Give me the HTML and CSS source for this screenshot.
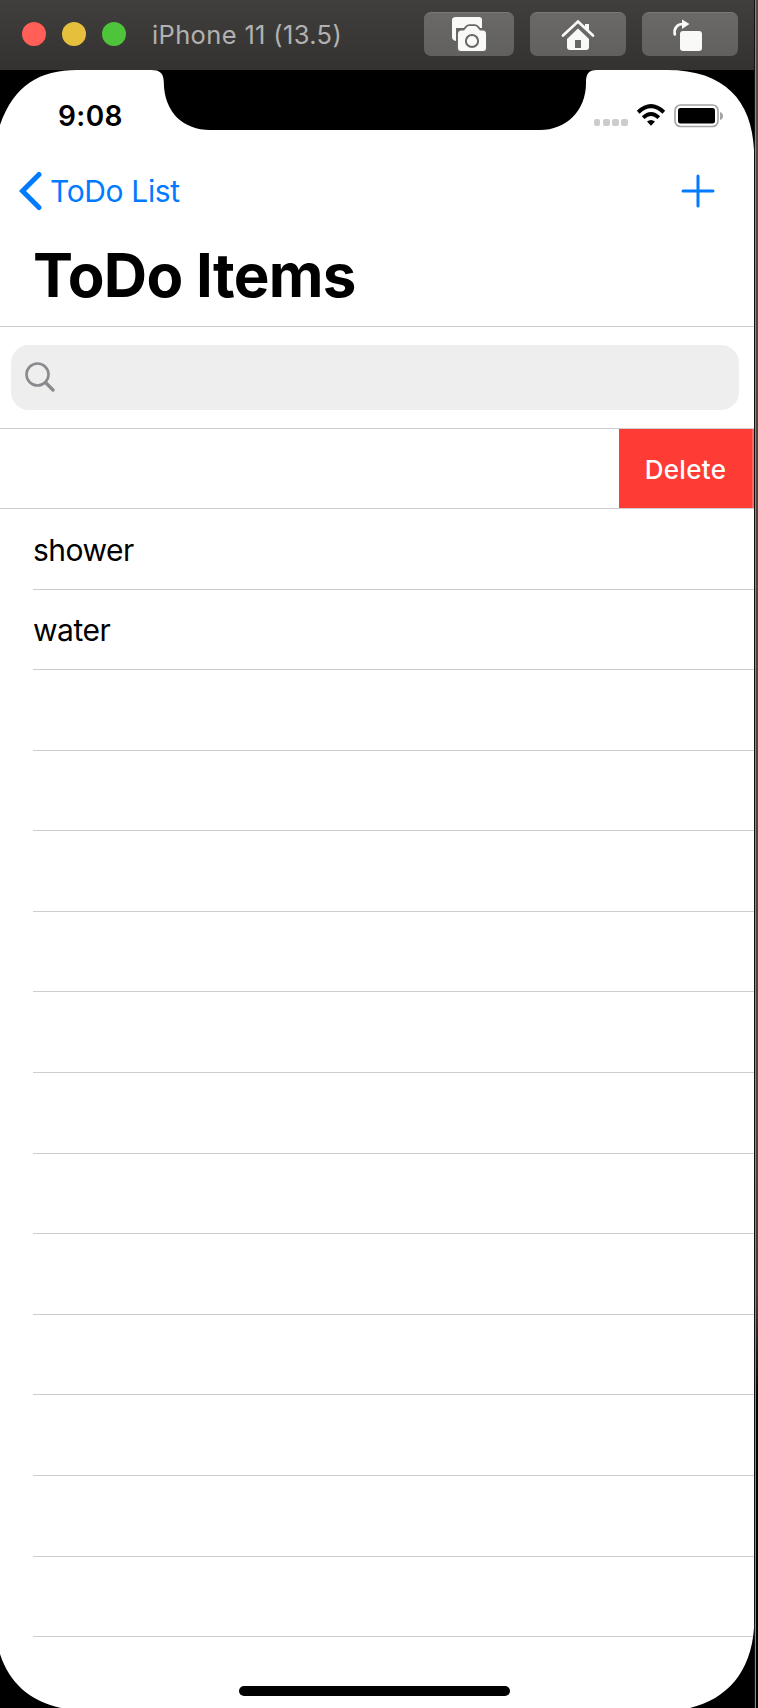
FILE: index.html
```html
<!DOCTYPE html>
<html lang="en">
<head>
<meta charset="utf-8">
<title>iPhone 11 (13.5)</title>
<link rel="stylesheet" href="styles.css">
</head>
<body>
<div class="window">
  <header class="titlebar">
    <div class="lights"><i class="light red"></i><i class="light yellow"></i><i class="light green"></i></div>
    <span class="device">iPhone 11 (13.5)</span>
    <div class="tools">
      <button class="tool tool-camera" aria-label="Screenshot">
        <svg width="36" height="36" viewBox="0 0 36 36"><path fill="#f9f9f7" d="M5 1H28Q31 1 31 4V12H5V25Q1 24 1 21V4Q1 1 5 1Z"/><path d="M7 18Q7 14.500 10.500 14.500H13L16 11Q17 10 18 10H24Q25 10 26 11L29 14.500H32Q35 14.500 35 18V32Q35 35 32 35H10Q7 35 7 32Z" fill="#f9f9f7" stroke="#686866" stroke-width="3.500" paint-order="stroke"/><circle cx="21" cy="25" r="6.100" fill="none" stroke="#686866" stroke-width="2"/></svg>
      </button>
      <button class="tool" aria-label="Home">
        <svg width="36" height="32" viewBox="0 0 36 32"><path fill="#f9f9f7" d="M18 6 29 17V28Q29 31 26 31H10Q7 31 7 28V17Z"/><path fill="#686866" d="M15 21H21V29H15Z"/><path fill="#f9f9f7" d="M25 5H29V13L25 9Z"/><path fill="none" stroke="#686866" stroke-width="5" d="M5 18.500 18 6 31 18.500"/><path fill="none" stroke="#f9f9f7" stroke-width="2.700" stroke-linecap="round" d="M3 16.500 18 2.500 33 16.500"/></svg>
      </button>
      <button class="tool tool-rotate" aria-label="Rotate">
        <svg width="30" height="32" viewBox="0 0 30 32"><rect x="8" y="12" width="22" height="20" rx="3" fill="#f9f9f7"/><path fill="none" stroke="#f9f9f7" stroke-width="2.700" stroke-linecap="round" d="M2.800 15.500C1.500 9 5.500 5 11 5"/><path fill="#f9f9f7" d="M10 .5 17.500 5 10 10Z"/></svg>
      </button>
    </div>
  </header>
  <main class="screen">
    <div class="status">
      <svg class="bezel" width="754" height="80" viewBox="0 0 754 80"><path d="M0 0H77C40 0 14 15 0 55ZM151 0C160 0 163.500 3 163.800 12C164 43 184 60 210 60H540C566 60 586 41 586 13C586 4 588 0 597 0ZM667 0H754V80C752 31 725 0 667 0Z"/></svg>
      <span class="time">9:08</span>
      <div class="indicators">
        <div class="signal"><i></i><i></i><i></i><i></i></div>
        <svg class="wifi" width="30" height="22" viewBox="0 0 30 22"><g fill="none" stroke="#000" stroke-width="4"><path d="M2.200 8.200Q15-3.800 27.800 8.200"/><path d="M7.200 13.600Q15 6.400 22.800 13.600"/></g><path d="M11 17.500Q15 14.500 19 17.500L15.500 21.200Q15 21.800 14.500 21.200Z"/></svg>
        <svg class="battery" width="50" height="24" viewBox="0 0 50 24"><rect x="1" y="1" width="43" height="21.500" rx="5.500" fill="#fff" stroke="#a3a3a3" stroke-width="1.600"/><rect x="4" y="4" width="37" height="15.500" rx="2.500"/><path fill="#a3a3a3" d="M46 8Q49 9 49 12T46 16Z"/></svg>
      </div>
    </div>
    <nav class="nav">
      <a class="back"><svg width="24" height="40" viewBox="0 0 24 40"><path d="M20 3.500 3.500 20 20 36.500" fill="none" stroke="#007aff" stroke-width="5" stroke-linecap="round"/></svg><span>ToDo List</span></a>
      <svg class="add" width="34" height="34" viewBox="0 0 34 34"><path d="M17 2V32M2 17H32" stroke="#007aff" stroke-width="3" stroke-linecap="round"/></svg>
    </nav>
    <h1 class="heading">ToDo Items</h1>
    <div class="search-bar"><div class="search">
      <svg width="30" height="30" viewBox="0 0 30 30" fill="none" stroke="#8a8a8e"><circle cx="12.500" cy="12.500" r="11" stroke-width="2.600"/><path d="M20.500 20.500 28 28" stroke-width="3.300" stroke-linecap="round"/></svg>
    </div></div>
    <div class="swiped"><button class="delete">Delete</button></div>
    <ul class="list">
      <li><span>shower</span></li><li><span>water</span></li>
      <li></li><li></li><li></li><li></li><li></li><li></li><li></li><li></li><li></li><li></li><li></li><li></li>
    </ul>
    <footer class="bottom">
      <svg class="bezel-bottom" width="754" height="80" viewBox="0 0 754 80"><path d="M0 26C9 54 29 73 61 80H0ZM754 0V80H690C727 71 751 44 754 0Z"/></svg>
      <i class="home-indicator"></i>
    </footer>
  </main>
  <aside class="edge"></aside>
</div>
</body>
</html>
```
FILE: styles.css
```css
* { box-sizing: border-box; }
body { margin: 0; background: #000; font-family: Inter, "Liberation Sans", sans-serif; }
.window { width: 758px; height: 1708px; display: grid; grid-template: 70px 1638px / 754px 4px; overflow: hidden; }
.titlebar { display: flex; align-items: center; background: linear-gradient(#403f3d, #333230); padding: 0 16px 2px 22px; }
.lights { display: flex; gap: 16px; }
.light { width: 24px; height: 24px; border-radius: 50%; }
.red { background: #ff5f57; }
.yellow { background: #e6c03d; }
.green { background: #4dc43a; }
.device { margin-left: 26px; font-size: 25.5px; letter-spacing: .35px; color: #b2b1b0; white-space: nowrap; }
.tools { display: flex; gap: 16px; margin-left: auto; }
.tool { width: 96px; height: 44px; padding: 0; border: 0; border-top: 1px solid #7a7978; border-radius: 7px; background: linear-gradient(#6a6968, #61605f); display: flex; align-items: center; justify-content: center; }
.tool-camera { width: 90px; padding-bottom: 1px; }
.tool-rotate { padding-right: 7px; }
.screen { background: #fff; display: flex; flex-direction: column; }
.status { height: 80px; position: relative; display: flex; justify-content: space-between; padding: 0 30px 0 58px; }
.bezel { position: absolute; left: 0; top: 0; }
.time { font-size: 28px; font-weight: 600; letter-spacing: .4px; line-height: 34px; margin-top: 29px; }
.indicators { display: flex; margin-top: 34px; height: 24px; }
.signal { display: flex; gap: 2.4px; align-items: flex-end; margin: 0 8px 2px 0; }
.signal i { width: 6.8px; height: 6.8px; border-radius: 2px; background: #ccc; }
.wifi { margin-right: 8px; }
.nav { height: 82px; display: flex; align-items: center; justify-content: space-between; padding: 0 39px 0 19px; }
.back { display: flex; align-items: center; gap: 7px; color: #007aff; font-size: 30px; letter-spacing: -.35px; }
.heading { margin: 0; height: 94px; padding: 7px 0 0 33px; font-size: 60px; letter-spacing: -.7px; line-height: 73px; font-weight: 700; }
.search-bar { height: 103px; border-top: 1px solid #cdcdcf; border-bottom: 1px solid #cdcdcf; padding: 18px 15px 0 11px; }
.search { height: 65px; border-radius: 18px; background: #eee; display: flex; align-items: center; padding: 0 14px 2px; }
.swiped { height: 80px; display: flex; justify-content: flex-end; border-bottom: 1px solid #cdcdcf; }
.delete { width: 135px; height: 79px; padding: 1px 0 0; border: 0; border-right: 2px solid #ff6961; background: #ff3b35; color: #fff; font: 500 26px Inter, sans-serif; letter-spacing: .3px; }
.list { list-style: none; margin: 0; padding: 0 0 0 33px; }
.list li { height: 80.58px; border-bottom: 1px solid #cdcdcf; display: flex; align-items: center; font-size: 30px; letter-spacing: -.5px; padding-top: 2px; }
.bottom { flex: 1; position: relative; display: flex; align-items: flex-end; justify-content: center; padding: 0 5px 12px 0; }
.bezel-bottom { position: absolute; left: 0; bottom: 0; }
.home-indicator { width: 271px; height: 10px; border-radius: 5px; background: #000; }
.edge { grid-area: 1 / 2 / 3 / 3; background: linear-gradient(90deg, #111 1px, #888 1px 2px, transparent 2px), linear-gradient(#514b45, #4b4438 500px, #514738 1100px, #403a30 1300px, #000 1400px); }
```
